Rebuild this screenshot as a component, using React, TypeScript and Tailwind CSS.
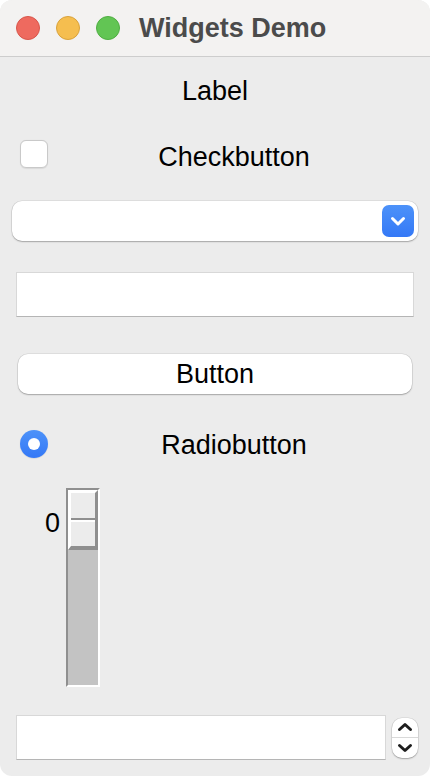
import React from "react";

const font = { fontFamily: '"Liberation Sans", Arial, sans-serif' };

export default function App() {
  return (
    <div className="w-[430px] h-[776px] bg-white" style={font}>
      <div className="w-full h-full rounded-[12px] overflow-hidden bg-[#ececec] flex flex-col">
        {/* Title bar */}
        <div className="h-[57px] shrink-0 bg-[#f3f2f1] border-b border-[#cdcdcd] flex items-center pl-[16px]">
          <div className="w-[24px] h-[24px] rounded-full bg-[#ee6a5f] border border-[#d8564b]" />
          <div className="w-[24px] h-[24px] rounded-full bg-[#f5be4f] border border-[#d9a23b] ml-[16px]" />
          <div className="w-[24px] h-[24px] rounded-full bg-[#62c554] border border-[#4fae42] ml-[16px]" />
          <div className="ml-[19px] text-[27px] font-bold text-[#4b4b4b] leading-none pt-[1px]">Widgets Demo</div>
        </div>

        {/* Label */}
        <div className="mt-[14px] h-[40px] flex items-center justify-center text-[27px] text-black leading-none">
          Label
        </div>

        {/* Checkbutton */}
        <div className="mt-[29px] h-[28px] flex items-center pl-[20px] pr-[10px]">
          <div className="w-[28px] h-[28px] rounded-[6px] bg-white border border-[#c9c9c9] shadow-[0_0.5px_1px_rgba(0,0,0,0.08)]" />
          <div className="flex-1 text-center text-[27px] text-black leading-none pt-[6px]">Checkbutton</div>
        </div>

        {/* Combobox */}
        <div className="mt-[33px] mx-[12px] h-[40px] rounded-[10px] bg-white shadow-[0_0_0_0.5px_rgba(0,0,0,0.12),0_1px_1.5px_rgba(0,0,0,0.25)] flex items-center justify-end pr-[4px]">
          <div className="w-[32px] h-[32px] rounded-[7px] bg-gradient-to-b from-[#4d92f9] to-[#3478f6] flex items-center justify-center">
            <svg width="32" height="32" viewBox="0 0 32 32">
              <path d="M10.5 13.5 L16 19 L21.5 13.5" fill="none" stroke="white" strokeWidth="3" strokeLinecap="round" strokeLinejoin="round" />
            </svg>
          </div>
        </div>

        {/* Entry */}
        <div className="mt-[31px] mx-[16px] h-[45px] bg-white border border-[#d8d8d8] border-b-[#b5b5b5]" />

        {/* Button */}
        <div className="mt-[37px] mx-[18px] h-[40px] rounded-[10px] bg-white shadow-[0_0_0_0.5px_rgba(0,0,0,0.12),0_1px_1.5px_rgba(0,0,0,0.25)] flex items-center justify-center text-[27px] text-black leading-none">
          Button
        </div>

        {/* Radiobutton */}
        <div className="mt-[36px] h-[28px] flex items-center pl-[20px] pr-[10px]">
          <div className="w-[28px] h-[28px] rounded-full bg-gradient-to-b from-[#4d92f9] to-[#3478f6] flex items-center justify-center shadow-[0_0.5px_1px_rgba(0,0,0,0.15)]">
            <div className="w-[12px] h-[12px] rounded-full bg-white" />
          </div>
          <div className="flex-1 text-center text-[27px] text-black leading-none pt-[2px]">Radiobutton</div>
        </div>

        {/* Scale */}
        <div className="mt-[30px] flex items-start pl-[45px]">
          <div className="mt-[22px] text-[27px] text-black leading-none w-[21px]">0</div>
          <div className="w-[34px] h-[199px] border-2 border-t-[#8f8f8f] border-l-[#8f8f8f] border-r-white border-b-white bg-[#c3c3c3] flex flex-col">
            <div className="h-[60px] border-t-[3px] border-l-[3px] border-r-[3px] border-b-[4px] border-t-white border-l-white border-r-[#8f8f8f] border-b-[#8f8f8f] bg-[#ececec] flex flex-col justify-center">
              <div className="h-[2px] bg-[#8f8f8f]" />
              <div className="h-[2px] bg-white" />
            </div>
          </div>
        </div>

        {/* Spinbox */}
        <div className="mt-[28px] flex items-center pl-[16px] pr-[12px]">
          <div className="flex-1 h-[45px] bg-white border border-[#d8d8d8] border-b-[#b5b5b5]" />
          <div className="ml-[6px] w-[26px] h-[40px] rounded-[10px] bg-white shadow-[0_0_0_0.5px_rgba(0,0,0,0.12),0_1px_1.5px_rgba(0,0,0,0.25)] flex flex-col">
            <div className="flex-1 flex items-center justify-center border-b border-[#d9d9d9]">
              <svg width="16" height="10" viewBox="0 0 16 10">
                <path d="M2.5 7.5 L8 2.5 L13.5 7.5" fill="none" stroke="#1e1e1e" strokeWidth="3" strokeLinecap="round" strokeLinejoin="round" />
              </svg>
            </div>
            <div className="flex-1 flex items-center justify-center">
              <svg width="16" height="10" viewBox="0 0 16 10">
                <path d="M2.5 2.5 L8 7.5 L13.5 2.5" fill="none" stroke="#1e1e1e" strokeWidth="3" strokeLinecap="round" strokeLinejoin="round" />
              </svg>
            </div>
          </div>
        </div>
      </div>
    </div>
  );
}
